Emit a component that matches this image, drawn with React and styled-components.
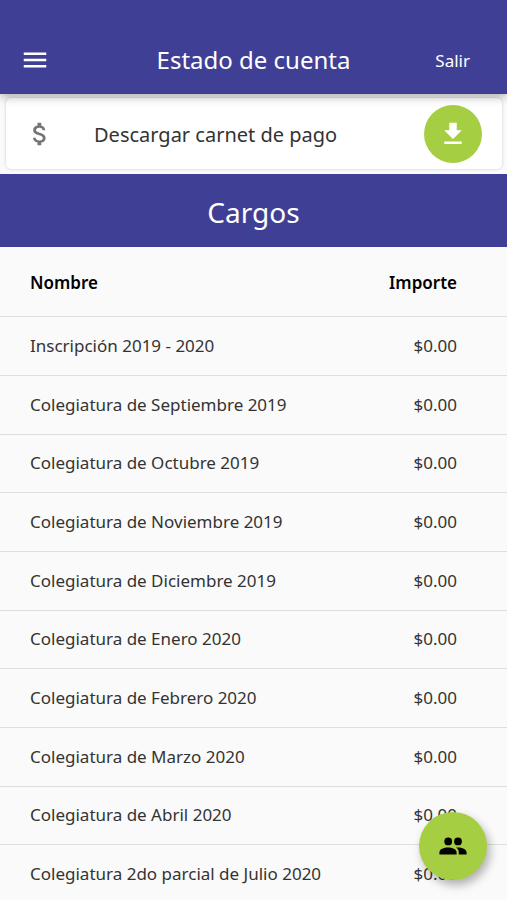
import React from "react";
import styled, { createGlobalStyle } from "styled-components";
import { MdMenu, MdAttachMoney, MdGetApp } from "react-icons/md";

const charges = [
  { name: "Inscripción 2019 - 2020", amount: "$0.00" },
  { name: "Colegiatura de Septiembre 2019", amount: "$0.00" },
  { name: "Colegiatura de Octubre 2019", amount: "$0.00" },
  { name: "Colegiatura de Noviembre 2019", amount: "$0.00" },
  { name: "Colegiatura de Diciembre 2019", amount: "$0.00" },
  { name: "Colegiatura de Enero 2020", amount: "$0.00" },
  { name: "Colegiatura de Febrero 2020", amount: "$0.00" },
  { name: "Colegiatura de Marzo 2020", amount: "$0.00" },
  { name: "Colegiatura de Abril 2020", amount: "$0.00" },
  { name: "Colegiatura 2do parcial de Julio 2020", amount: "$0.00" }
];

const PeopleIcon = () => (
  <svg width="28" height="18" viewBox="0 0 28 18" fill="currentColor">
    <circle cx="9.2" cy="4.4" r="3.9" />
    <circle cx="19" cy="4.4" r="3.9" />
    <path d="M0.4 17.6v-2.2C0.4 11.8 5 10.4 9 10.4s8.6 1.4 8.6 5v2.2z" />
    <path d="M17 10.5c5-0.5 10.6 1.2 10.6 4.9v2.2h-7.8v-2.2c0-2.2-1-3.8-2.8-4.9z" />
  </svg>
);

export default function App() {
  return (
    <Page>
      <GlobalStyle />
      <Toolbar>
        <MenuButton type="button" aria-label="Menú">
          <MdMenu size={30} />
        </MenuButton>
        <Title>Estado de cuenta</Title>
        <LogoutButton type="button">Salir</LogoutButton>
      </Toolbar>
      <Content>
        <DownloadCard>
          <MdAttachMoney size={30} color="#757575" />
          <DownloadLabel>Descargar carnet de pago</DownloadLabel>
          <RoundButton type="button" aria-label="Descargar" $size={58}>
            <MdGetApp size={30} />
          </RoundButton>
        </DownloadCard>
        <SectionTitle>Cargos</SectionTitle>
        <ChargesTable>
          <thead>
            <tr>
              <HeadCell scope="col">Nombre</HeadCell>
              <HeadCell scope="col" $right>
                Importe
              </HeadCell>
            </tr>
          </thead>
          <tbody>
            {charges.map(charge => (
              <Row key={charge.name}>
                <Cell>{charge.name}</Cell>
                <Cell $right>{charge.amount}</Cell>
              </Row>
            ))}
          </tbody>
        </ChargesTable>
      </Content>
      <FloatingButton type="button" aria-label="Alumnos" $size={68} $dark>
        <PeopleIcon />
      </FloatingButton>
    </Page>
  );
}

const GlobalStyle = createGlobalStyle`
  * {
    box-sizing: border-box;
  }
  body {
    margin: 0;
    background: #fafafa;
    color: #333333;
    font-family: "Noto Sans", sans-serif;
    font-size: 17px;
  }
  button {
    border: 0;
    padding: 0;
    background: none;
    color: inherit;
    font: inherit;
    cursor: pointer;
  }
`;

const Page = styled.div`
  display: flex;
  flex-direction: column;
  height: 100vh;
`;

const Toolbar = styled.header`
  position: relative;
  z-index: 1;
  display: grid;
  grid-template-columns: 80px 1fr 80px;
  align-items: center;
  flex: none;
  padding: 36px 20px 10px;
  background: #3f4095;
  color: #ffffff;
  box-shadow: 0 2px 10px rgba(0, 0, 0, 0.35);
`;

const MenuButton = styled.button`
  display: flex;
  justify-self: start;
`;

const Title = styled.h1`
  margin: 0;
  font-size: 24px;
  font-weight: 400;
  line-height: 48px;
  text-align: center;
`;

const LogoutButton = styled.button`
  justify-self: end;
  padding-right: 17px;
`;

const Content = styled.main`
  flex: 1;
  min-height: 0;
  overflow-y: auto;
  scrollbar-width: none;
`;

const DownloadCard = styled.section`
  display: flex;
  align-items: center;
  margin: 4px 5px 5px 6px;
  padding: 7px 20px 6px 19px;
  border-radius: 5px;
  background: #ffffff;
  box-shadow: 0 0 3px rgba(0, 0, 0, 0.2);
`;

const DownloadLabel = styled.span`
  flex: 1;
  padding-left: 39px;
  font-size: 20px;
`;

const RoundButton = styled.button`
  display: flex;
  align-items: center;
  justify-content: center;
  flex: none;
  width: ${props => props.$size}px;
  height: ${props => props.$size}px;
  border-radius: 50%;
  background: #a6ce42;
  color: ${props => (props.$dark ? "#000000" : "#ffffff")};
`;

const FloatingButton = styled(RoundButton)`
  position: fixed;
  right: 20px;
  bottom: 20px;
  z-index: 2;
  box-shadow: 3px 5px 10px rgba(0, 0, 0, 0.3);
`;

const SectionTitle = styled.h2`
  margin: 0;
  padding: 4px 0 1px;
  background: #3f4095;
  color: #ffffff;
  font-size: 28px;
  font-weight: 400;
  line-height: 68px;
  text-align: center;
`;

const ChargesTable = styled.table`
  width: 100%;
  border-spacing: 0;
  white-space: nowrap;
`;

const HeadCell = styled.th`
  height: 70px;
  padding: ${props => (props.$right ? "2px 50px 0 0" : "2px 0 0 30px")};
  border-bottom: 1px solid #dedede;
  color: #000000;
  font-weight: 600;
  text-align: ${props => (props.$right ? "right" : "left")};
`;

const Cell = styled.td`
  padding: ${props => (props.$right ? "0 50px 2px 0" : "0 0 2px 30px")};
  border-bottom: 1px solid #dedede;
  text-align: ${props => (props.$right ? "right" : "left")};
`;

/* 59, 59, 58 keeps the rows at an average of 58 2/3 */
const Row = styled.tr`
  height: 59px;
  &:nth-child(3n) {
    height: 58px;
  }
`;
